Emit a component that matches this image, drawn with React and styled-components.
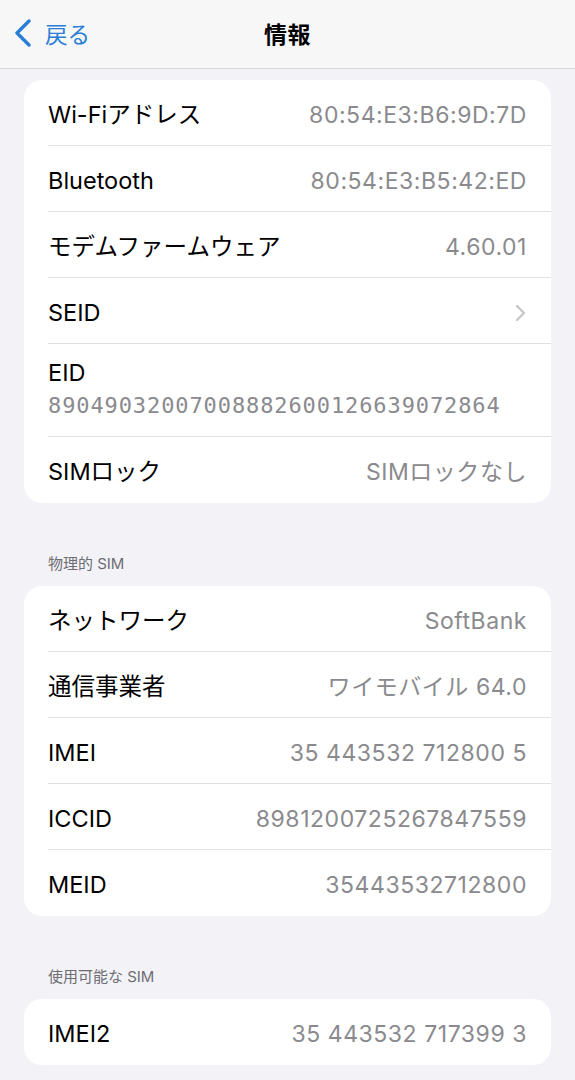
import React from 'react'
import styled, { createGlobalStyle } from 'styled-components'

const GlobalStyle = createGlobalStyle`
    html, body {
        margin: 0;
        padding: 0;
        background: #f2f2f7;
    }
    body {
        font-family: "Inter", "Noto Sans CJK JP", sans-serif;
        -webkit-font-smoothing: antialiased;
    }
`

const Screen = styled.div`
    width: 575px;
    height: 1080px;
    overflow: hidden;
    background: #f2f2f7;
`

const NavBar = styled.header`
    height: 69px;
    box-sizing: border-box;
    display: grid;
    grid-template-columns: 1fr auto 1fr;
    align-items: center;
    padding: 0 14px 2px;
    background: #f7f7f8;
    border-bottom: 1px solid #d9d9dc;
`

const BackButton = styled.div`
    display: flex;
    align-items: center;
    gap: 13px;
    color: #2a7ed6;
    font-size: 22.5px;
    svg {
        display: block;
    }
`

const Title = styled.h1`
    margin: 0;
    font-size: 23px;
    font-weight: 700;
    color: #000;
    letter-spacing: 0.5px;
`

const Content = styled.main`
    padding: 11px 24px 0;
`

const Card = styled.section`
    background: #fff;
    border-radius: 18px;
    overflow: hidden;
`

const Row = styled.div`
    display: flex;
    align-items: center;
    justify-content: space-between;
    min-height: 66px;
    margin-left: 24px;
    padding-right: 24px;
    padding-top: 4px;
    box-sizing: border-box;
    border-bottom: 1px solid #e1e1e4;
    &:last-child {
        border-bottom: none;
    }
`

const StackRow = styled(Row)`
    flex-direction: column;
    align-items: flex-start;
    justify-content: flex-start;
    padding-top: 15px;
    padding-bottom: 16px;
`

const Label = styled.span`
    font-size: 23.5px;
    line-height: 28px;
    color: #000;
`

const Value = styled.span`
    font-size: 23px;
    line-height: 28px;
    color: #8a8a8e;
    letter-spacing: 0.55px;
`

const MonoValue = styled.span`
    margin-top: 5px;
    font-family: "DejaVu Sans Mono", monospace;
    font-size: 22px;
    line-height: 28px;
    color: #8a8a8e;
    letter-spacing: 0.9px;
`

const SectionHeader = styled.div`
    padding: 50px 24px 11px;
    font-size: 15px;
    line-height: 22px;
    color: #6d6d72;
`

const Chevron = () => (
    <svg width="12" height="18" viewBox="0 0 12 18">
        <path d="M2 2 L9 9 L2 16" fill="none" stroke="#c4c4c7" strokeWidth="2.2" strokeLinecap="round" strokeLinejoin="round" />
    </svg>
)

const BackChevron = () => (
    <svg width="18" height="28" viewBox="0 0 18 28">
        <path d="M15 2 L3 14 L15 26" fill="none" stroke="#2a7ed6" strokeWidth="3.4" strokeLinecap="round" strokeLinejoin="round" />
    </svg>
)

const InfoRow = ({ label, value }) => (
    <Row>
        <Label>{label}</Label>
        <Value>{value}</Value>
    </Row>
)

const App = () => {
    return (
        <Screen>
            <GlobalStyle />
            <NavBar>
                <BackButton>
                    <BackChevron />
                    <span>戻る</span>
                </BackButton>
                <Title>情報</Title>
                <div />
            </NavBar>
            <Content>
                <Card>
                    <InfoRow label="Wi-Fiアドレス" value="80:54:E3:B6:9D:7D" />
                    <InfoRow label="Bluetooth" value="80:54:E3:B5:42:ED" />
                    <InfoRow label="モデムファームウェア" value="4.60.01" />
                    <Row>
                        <Label>SEID</Label>
                        <Chevron />
                    </Row>
                    <StackRow>
                        <Label>EID</Label>
                        <MonoValue>89049032007008882600126639072864</MonoValue>
                    </StackRow>
                    <InfoRow label="SIMロック" value="SIMロックなし" />
                </Card>
                <SectionHeader>物理的 SIM</SectionHeader>
                <Card>
                    <InfoRow label="ネットワーク" value="SoftBank" />
                    <InfoRow label="通信事業者" value="ワイモバイル 64.0" />
                    <InfoRow label="IMEI" value="35 443532 712800 5" />
                    <InfoRow label="ICCID" value="8981200725267847559" />
                    <InfoRow label="MEID" value="35443532712800" />
                </Card>
                <SectionHeader>使用可能な SIM</SectionHeader>
                <Card>
                    <InfoRow label="IMEI2" value="35 443532 717399 3" />
                </Card>
            </Content>
        </Screen>
    )
}

export default App
